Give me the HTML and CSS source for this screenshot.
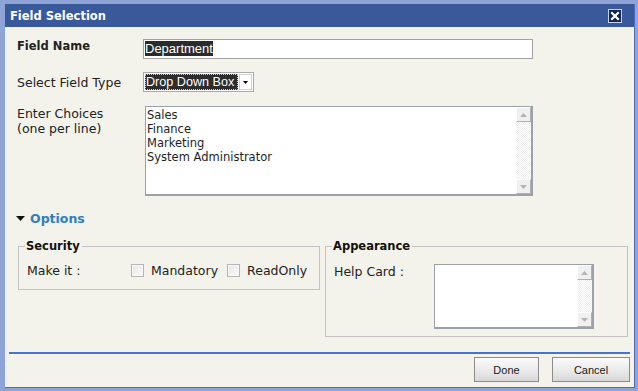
FILE: index.html
```html
<!DOCTYPE html>
<html>
<head>
<meta charset="utf-8">
<link rel="stylesheet" href="styles.css">
</head>
<body>
<div class="dialog">
  <div class="titlebar">
    <span class="title">Field Selection</span>
    <svg class="close" width="14" height="14" viewBox="0 0 14 14">
      <rect x="0.5" y="0.5" width="13" height="13" fill="#10245a" stroke="#c9d3ea"/>
      <path d="M4 4 L10 10 M10 4 L4 10" stroke="#fff" stroke-width="2.2" stroke-linecap="square"/>
    </svg>
  </div>
  <div class="content">
    <div class="row row-name">
      <div class="label bold">Field Name</div>
      <div class="input"><span class="sel">Department</span></div>
    </div>
    <div class="row row-type">
      <div class="label">Select Field Type</div>
      <div class="select">
        <span class="select-value">Drop Down Box</span>
        <span class="select-arrow"><svg width="7" height="4" viewBox="0 0 7 4"><path d="M1 0 H6 L3.5 3 Z" fill="#000"/></svg></span>
      </div>
    </div>
    <div class="row row-choices">
      <div class="label">Enter Choices<br>(one per line)</div>
      <div class="textarea choices">
        <div class="ta-text">Sales<br>Finance<br>Marketing<br>System Administrator</div>
        <div class="scrollbar">
          <span class="sb-btn"><svg width="7" height="4" viewBox="0 0 7 4"><path d="M0 4 H7 L3.5 0 Z" fill="#b4b4b4"/></svg></span>
          <span class="sb-track"></span>
          <span class="sb-btn"><svg width="7" height="4" viewBox="0 0 7 4"><path d="M0 0 H7 L3.5 4 Z" fill="#b4b4b4"/></svg></span>
        </div>
      </div>
    </div>
    <div class="options">
      <svg class="caret" width="9" height="5" viewBox="0 0 9 5"><path d="M0 0 H9 L4.5 5 Z" fill="#111"/></svg>
      <span class="options-text">Options</span>
    </div>
    <div class="groups">
      <fieldset class="group security">
        <legend>Security</legend>
        <div class="fs-row">
          <span class="fs-label">Make it :</span>
          <span class="cb"></span><span class="cb-text">Mandatory</span>
          <span class="cb cb2"></span><span class="cb-text">ReadOnly</span>
        </div>
      </fieldset>
      <fieldset class="group appearance">
        <legend>Appearance</legend>
        <div class="fs-row fs-top">
          <span class="fs-label help">Help Card :</span>
          <div class="textarea help-ta">
            <div class="ta-text"></div>
            <div class="scrollbar">
              <span class="sb-btn"><svg width="7" height="4" viewBox="0 0 7 4"><path d="M0 4 H7 L3.5 0 Z" fill="#b4b4b4"/></svg></span>
              <span class="sb-track"></span>
              <span class="sb-btn"><svg width="7" height="4" viewBox="0 0 7 4"><path d="M0 0 H7 L3.5 4 Z" fill="#b4b4b4"/></svg></span>
            </div>
          </div>
        </div>
      </fieldset>
    </div>
  </div>
  <div class="sep"></div>
  <div class="footer">
    <button class="btn btn-done">Done</button>
    <button class="btn btn-cancel">Cancel</button>
  </div>
</div>
</body>
</html>
```
FILE: styles.css
```css
* { box-sizing: border-box; }
html, body { margin: 0; padding: 0; }
body {
  background: #8ea4d6;
  width: 638px;
  height: 391px;
  overflow: hidden;
  font-family: "DejaVu Sans", Verdana, sans-serif;
  font-size: 12.5px;
  color: #222;
}
.dialog {
  margin: 4px 0 0 5px;
  width: 630px;
  height: 384px;
  background: #f3f3eb;
  border-right: 1px solid #4a6dbf;
  border-bottom: 1px solid #4a6dbf;
  display: flex;
  flex-direction: column;
}
.titlebar {
  height: 23px;
  flex: none;
  background: #39599a;
  display: flex;
  align-items: center;
  justify-content: space-between;
  padding: 0 12px 0 5px;
}
.title {
  color: #fff;
  font-weight: bold;
  font-size: 11.5px;
}
.close { display: block; }
.content {
  flex: 1;
  padding: 12px 0 0 12px;
}
.row { display: flex; align-items: flex-start; }
.label { width: 126px; flex: none; line-height: 15px; }
.bold { font-weight: bold; font-size: 11.5px; }
.input {
  width: 390px;
  height: 20px;
  border: 1px solid #a2a2a2;
  background: #fff;
  padding: 1px 1px;
}
.sel {
  display: inline-block;
  background: #2b2b2b;
  color: #fff;
  font-family: "Liberation Sans", Arial, sans-serif;
  font-size: 13px;
  line-height: 15px;
}
.row-type { margin-top: 13px; align-items: center; }
.select {
  display: flex;
  width: 111px;
  height: 20px;
  border: 1px solid #a9a9a9;
  background: #fff;
  padding: 1px;
}
.select-value {
  flex: 1;
  background: #2d2d2d;
  color: #fff;
  outline: 1px dotted #c8c8c8;
  outline-offset: -1px;
  font-family: "Liberation Sans", Arial, sans-serif;
  font-size: 12.6px;
  line-height: 16px;
  padding-left: 1px;
  white-space: nowrap;
  overflow: hidden;
}
.select-arrow {
  width: 13px;
  flex: none;
  margin-left: 1px;
  border: 1px solid #d0d0d0;
  display: flex;
  align-items: center;
  justify-content: center;
  background: #fff;
}
.select-arrow svg { display: block; margin-top: 1px; }
.row-choices { margin-top: 14px; }
.textarea {
  display: flex;
  border: 1px solid #9ca1a8;
  border-right-width: 2px;
  border-bottom-width: 2px;
  background: #fff;
}
.choices { width: 388px; height: 90px; margin-left: 2px; }
.ta-text {
  flex: 1;
  padding: 1px 1px;
  font-size: 11.5px;
  line-height: 14px;
  color: #1e1e1e;
}
.scrollbar {
  width: 15px;
  flex: none;
  display: flex;
  flex-direction: column;
  background: repeating-conic-gradient(#efefef 0 25%, #fff 0 50%) 0 0 / 2px 2px;
}
.sb-btn {
  height: 15px;
  flex: none;
  background: #f0f0f0;
  border: 1px solid;
  border-color: #fff #b0b0b0 #b0b0b0 #fff;
  display: flex;
  align-items: center;
  justify-content: center;
}
.sb-btn svg { display: block; }
.sb-track { flex: 1; }
.options {
  margin-top: 14px;
  height: 16px;
  display: flex;
  align-items: center;
  gap: 5px;
  margin-left: -1px;
}
.caret { display: block; margin-top: 1px; }
.options-text {
  color: #2f7fbf;
  font-weight: bold;
  font-size: 12.5px;
}
.groups {
  display: flex;
  align-items: flex-start;
  gap: 5px;
  margin-top: 13px;
  margin-left: 1px;
}
.group {
  margin: 0;
  border: 1px solid #c4c4c4;
  padding: 0 8px;
  min-width: 0;
}
.group legend {
  font-weight: bold;
  font-size: 11.5px;
  line-height: 14px;
  padding: 0 2px 0 1px;
  margin-left: -2px;
  color: #111;
}
.security { width: 302px; padding-bottom: 12px; }
.appearance { width: 303px; padding-bottom: 7px; }
.fs-row {
  display: flex;
  align-items: center;
  margin-top: 11px;
  height: 13px;
}
.fs-top { align-items: flex-start; height: auto; }
.fs-label { width: 104px; flex: none; line-height: 15px; }
.help { width: 100px; }
.cb {
  width: 13px;
  height: 13px;
  flex: none;
  border: 1px solid #b5b5b5;
  background: linear-gradient(135deg, #e6e6e6, #fbfbfb);
  box-shadow: inset 0 0 0 1px #f8f8f8;
}
.cb-text { margin-left: 7px; }
.cb2 { margin-left: 9px; }
.help-ta { width: 160px; height: 65px; }
.sep {
  height: 2px;
  flex: none;
  background: #4e72c2;
  margin: 0 4px;
}
.footer {
  height: 33px;
  flex: none;
  display: flex;
  justify-content: flex-end;
  gap: 13px;
  padding: 3px 4px 0 0;
}
.btn {
  height: 25px;
  border: 1px solid #8c8c8c;
  background: linear-gradient(#fbfbfb, #eaeaea 55%, #d8d8d8);
  font-family: "Liberation Sans", Arial, sans-serif;
  font-size: 11px;
  color: #1a1a1a;
  padding: 0;
}
.btn-done { width: 65px; }
.btn-cancel { width: 78px; }
```
